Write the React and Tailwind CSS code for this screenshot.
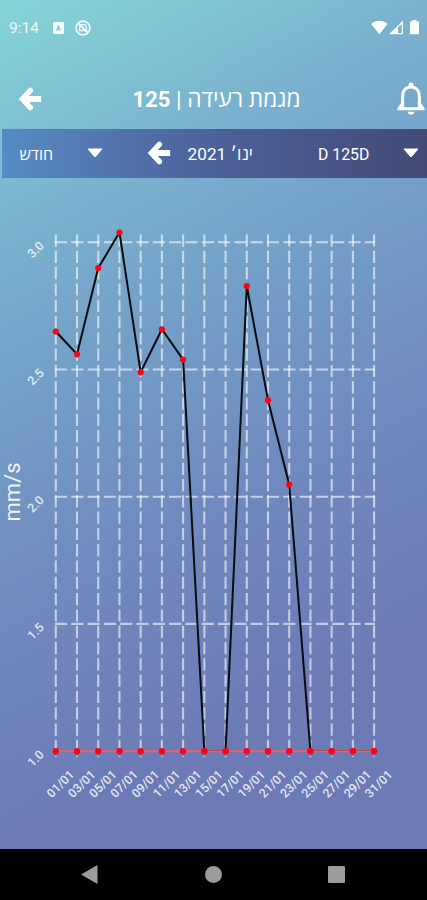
const days = ['01', '03', '05', '07', '09', '11', '13', '15', '17', '19', '21', '23', '25', '27', '29', '31'];
const yTicks = ['3.0', '2.5', '2.0', '1.5', '1.0'];

// pixel heights of the readings, one per day
const readings = [331.5, 354.3, 268, 232.5, 372.2, 329.3, 359.6, 751, 751, 286, 400.3, 484.5, 751, 751, 751, 751];

const X0 = 55.8;
const STEP = 21.22;
const TOP = 242.3;
const ROW = 127.2;
const BASE = 751.3;

const xAt = (i) => X0 + i * STEP;

function ArrowLeft() {
  return (
    <svg width="24" height="24" viewBox="0 0 24 24" fill="none" stroke="#fff">
      <path d="M12.400 3.400 4.400 12l8 8.600" strokeWidth="5.400" strokeLinecap="round" />
      <path d="M5 12h18.200" strokeWidth="6" />
    </svg>
  );
}

function Caret() {
  return (
    <svg className="shrink-0" width="16" height="10" viewBox="0 0 16 10" fill="#fff" stroke="#fff" strokeLinejoin="round">
      <path d="M1 1h14L8 9z" strokeWidth="1" />
    </svg>
  );
}

function Bell() {
  return (
    <svg width="28" height="34" viewBox="0 0 28 34" fill="none">
      <path d="M5.600 22v-7.500C5.600 8.500 9 5 14 5s8.400 3.500 8.400 9.500V22" stroke="#fff" strokeWidth="3.100" />
      <path fillRule="evenodd" d="M4.050 21 .5 26v2.300h27V26l-3.550-5h-3.100V25.300H7.150V21z" fill="#fff" />
      <circle cx="14" cy="2.900" r="2.500" fill="#fff" />
      <path d="M10.500 29.800h7c-.5 2-1.800 3-3.500 3s-3-1-3.500-3z" fill="#fff" />
    </svg>
  );
}

function StatusBar() {
  return (
    <div className="flex h-[54px] items-center pl-[9px] pr-[7px] pt-[2px] text-white">
      <span className="w-[44px] pt-px text-[15.500px] leading-none text-white/85">9:14</span>
      <svg className="mr-[11px]" width="11" height="12" viewBox="0 0 11 12">
        <path fillRule="evenodd" fill="#fff" fillOpacity=".92" d="M1 0h9l1 1v10l-1 1H1l-1-1V1zM5 3.300 3 8.800h1.300l.4-1.100h1.600l.4 1.100H8L6 3.300z" />
      </svg>
      <svg width="16" height="16" viewBox="0 0 16 16" fill="none" stroke="#fff" strokeOpacity=".88">
        <circle cx="8" cy="8" r="6.900" strokeWidth="1.600" />
        <path d="M4.600 10.500V7.500C4.600 5.500 6 4.300 8 4.300s3.400 1.200 3.400 3.200v3z" strokeWidth="1.300" />
        <path d="m3.500 3.500 9 9" strokeWidth="1.800" />
      </svg>
      <svg className="mb-[2px] ml-auto" width="49" height="15" viewBox="0 0 49 15" fill="#fff">
        <path d="M.2 4C5-.3 12-.3 16.500 4L8.300 14.300z" />
        <path fillRule="evenodd" d="M18 14.300 32 .5v13.800zM27 7.500v5.600h3.700V3.900z" />
        <path d="M41.500 0h4v1.400h2.500v12.900h-9V1.400h2.500z" />
      </svg>
    </div>
  );
}

function Header() {
  return (
    <header className="flex h-[74.500px] items-center pl-[17.500px] pt-[16px]">
      <ArrowLeft />
      <h1 dir="rtl" className="ml-[81px] w-[178px] whitespace-nowrap pt-[3px] text-[22.700px] leading-none text-white">
        מגמת רעידה | <span className="text-[22px] font-bold">125</span>
      </h1>
      <div className="ml-[96.500px] shrink-0">
        <Bell />
      </div>
    </header>
  );
}

function FilterBar() {
  return (
    <div className="ml-[2px] flex h-[49px] items-center bg-linear-to-r from-[#578bc4] via-[#4c6199] to-[#434b75] text-white">
      <span dir="rtl" className="ml-[15px] w-[36px] whitespace-nowrap pt-[3px] text-[16px] leading-none">חודש</span>
      <div className="ml-[34px]">
        <Caret />
      </div>
      <div className="ml-[43.500px]">
        <ArrowLeft />
      </div>
      <span dir="rtl" className="ml-[16.500px] w-[66px] whitespace-nowrap pt-[3px] text-[17.200px] leading-none">ינו׳ 2021</span>
      <span className="ml-[65px] w-[52px] whitespace-nowrap pt-[3px] text-[15.800px] leading-none">D 125D</span>
      <div className="ml-[33px]">
        <Caret />
      </div>
    </div>
  );
}

function Chart() {
  return (
    <svg className="block" width="427" height="671" viewBox="0 178 427 671">
      <g stroke="#fff" strokeOpacity=".6" strokeWidth="2.100" strokeDasharray="12.200 4.100">
        {yTicks.slice(0, 4).map((tick, i) => (
          <path key={tick} d={`M55 ${TOP + i * ROW}H375`} />
        ))}
        {days.map((day, i) => (
          <path key={day} d={`M${xAt(i)} 234.500V757`} />
        ))}
      </g>

      <polyline
        points={readings.map((y, i) => `${xAt(i)},${y}`).join(' ')}
        fill="none"
        stroke="#080b10"
        strokeWidth="2"
      />
      <path d={`M${X0} ${BASE}H${xAt(15)}`} stroke="#ee5f6e" strokeWidth="2" />
      <g fill="#ff0015">
        {days.map((day, i) => (
          <circle key={day} cx={xAt(i)} cy={BASE} r="3.200" />
        ))}
        {readings.map((y, i) => (
          <circle key={i} cx={xAt(i)} cy={y} r="3.100" />
        ))}
      </g>

      <g fill="#fff" fillOpacity=".84" fontSize="12.300" fontWeight="500">
        {yTicks.map((tick, i) => (
          <text key={tick} textAnchor="end" transform={`translate(44.800 ${TOP + 4.200 + i * ROW}) rotate(-45)`}>
            {tick}
          </text>
        ))}
        {days.map((day, i) => (
          <text key={day} transform={`translate(${xAt(i) - 4} 798.500) rotate(-45)`}>
            {day}/01
          </text>
        ))}
      </g>
      <text fill="#fff" fillOpacity=".92" fontSize="22" textAnchor="middle" transform="translate(20 492) rotate(-90)">
        mm/s
      </text>
    </svg>
  );
}

function NavBar() {
  return (
    <nav className="flex h-[51px] items-center bg-black pl-[81px]">
      <svg width="17" height="19" viewBox="0 0 17 19" fill="#9c9c9c">
        <path d="M0 9.500 16.500 0v19z" />
      </svg>
      <div className="ml-[107px] size-[17px] rounded-full bg-[#9c9c9c]" />
      <div className="ml-[106px] size-[17px] rounded-[1px] bg-[#9c9c9c]" />
    </nav>
  );
}

export default function App() {
  return (
    <div className="h-[900px] w-[427px] overflow-hidden bg-black font-['Roboto','Open_Sans',sans-serif]">
      <div className="h-[849px] bg-[linear-gradient(152deg,#84d5d6_0%,#7bb3cf_21%,#729bc5_41%,#7089be_58%,#6c7ab6_80%)]">
        <StatusBar />
        <Header />
        <FilterBar />
        <Chart />
      </div>
      <NavBar />
    </div>
  );
}
